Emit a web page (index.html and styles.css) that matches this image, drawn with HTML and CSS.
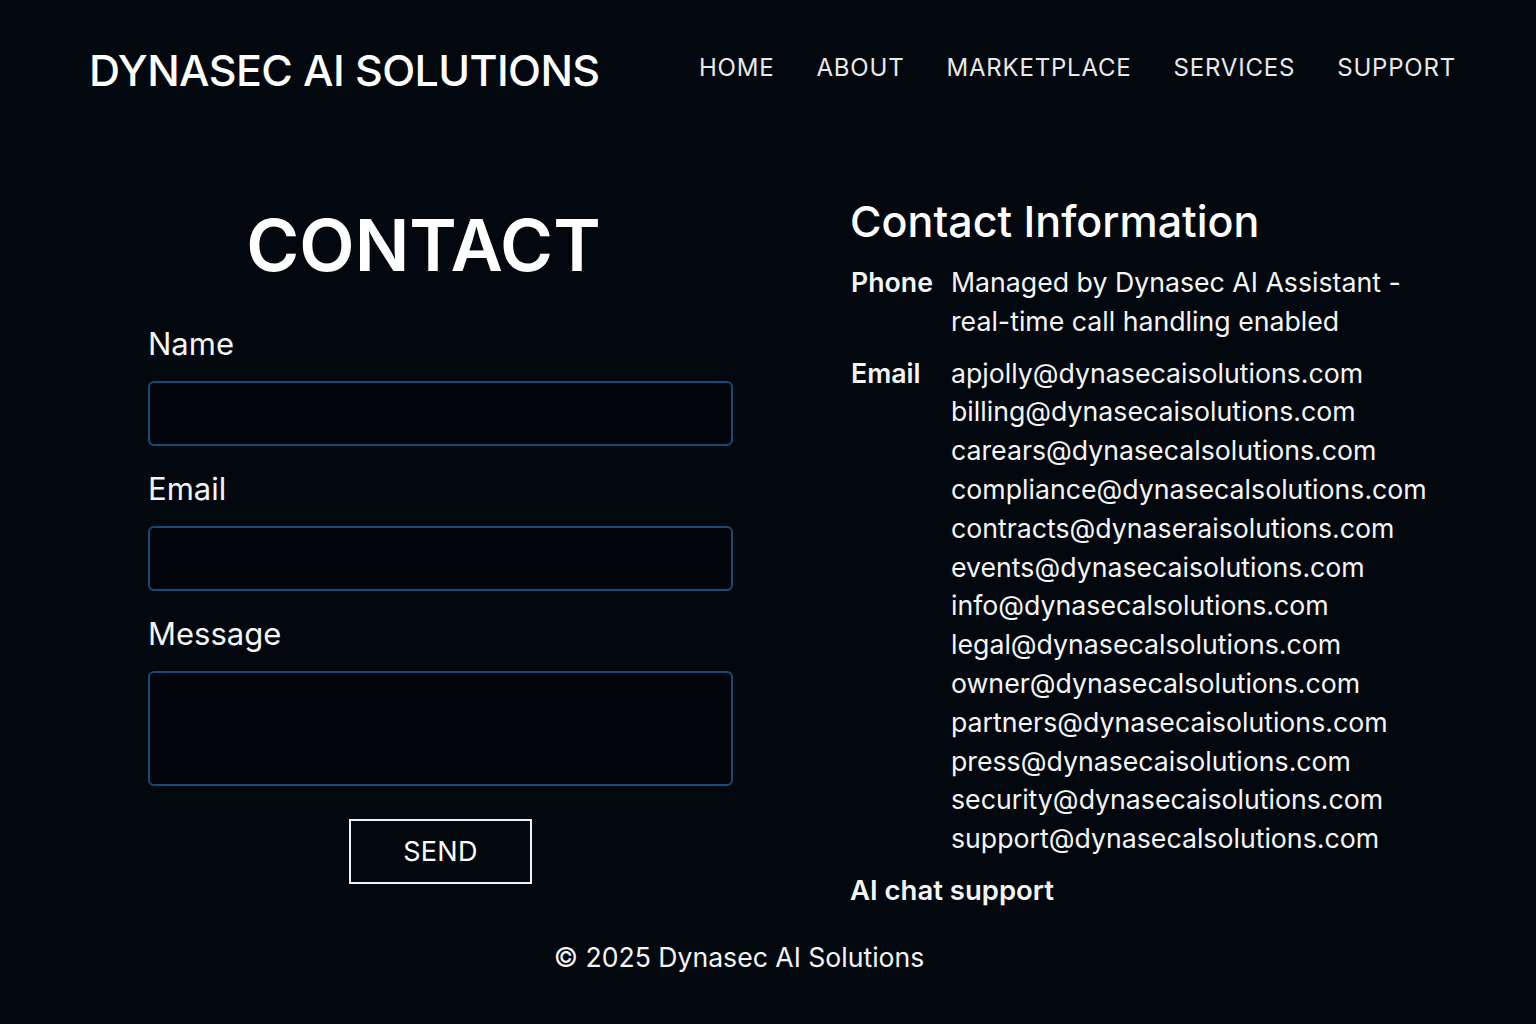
FILE: index.html
```html
<!DOCTYPE html>
<html lang="en">
<head>
<meta charset="utf-8">
<title>Contact - Dynasec AI Solutions</title>
<link rel="stylesheet" href="styles.css">
</head>
<body>
<header class="site-header">
  <div class="logo">DYNASEC AI SOLUTIONS</div>
  <nav class="nav">
    <a href="#">HOME</a>
    <a href="#">ABOUT</a>
    <a href="#">MARKETPLACE</a>
    <a href="#">SERVICES</a>
    <a href="#">SUPPORT</a>
  </nav>
</header>
<main class="main">
  <section class="form-col">
    <h1 class="contact-title">CONTACT</h1>
    <form class="form">
      <label class="label" for="name">Name</label>
      <input class="field" id="name" type="text">
      <label class="label" for="email">Email</label>
      <input class="field" id="email" type="email">
      <label class="label" for="message">Message</label>
      <textarea class="field area" id="message"></textarea>
      <div class="btn-row"><button class="send" type="button">SEND</button></div>
    </form>
  </section>
  <section class="info-col">
    <h2 class="info-title">Contact Information</h2>
    <dl class="info">
      <dt>Phone</dt>
      <dd>Managed by Dynasec AI Assistant -<br>real-time call handling enabled</dd>
      <dt>Email</dt>
      <dd>apjolly@dynasecaisolutions.com<br>billing@dynasecaisolutions.com<br>carears@dynasecalsolutions.com<br>compliance@dynasecalsolutions.com<br>contracts@dynaseraisolutions.com<br>events@dynasecaisolutions.com<br>info@dynasecalsolutions.com<br>legal@dynasecalsolutions.com<br>owner@dynasecalsolutions.com<br>partners@dynasecaisolutions.com<br>press@dynasecaisolutions.com<br>security@dynasecaisolutions.com<br>support@dynasecalsolutions.com</dd>
    </dl>
    <div class="chat">AI chat support</div>
  </section>
</main>
<footer class="footer">© 2025 Dynasec AI Solutions</footer>
</body>
</html>
```
FILE: styles.css
```css
* { box-sizing: border-box; }
html, body { margin: 0; padding: 0; }
body {
  background: #03080f;
  color: #f4f5f6;
  font-family: Inter, "Noto Sans", sans-serif;
  width: 1536px;
  height: 1024px;
  overflow: hidden;
}
.site-header {
  display: flex;
  justify-content: space-between;
  align-items: center;
  height: 135px;
  padding: 0 80px 0 89px;
}
.logo {
  font-size: 43px;
  font-weight: 500;
  letter-spacing: -0.6px;
  color: #ffffff;
  margin-top: 5px;
}
.nav {
  display: flex;
  gap: 42px;
}
.nav a {
  color: #e8e9ea;
  text-decoration: none;
  font-size: 24px;
  letter-spacing: 0.8px;
}
.main {
  display: grid;
  grid-template-columns: 585px 1fr;
  column-gap: 117px;
  padding-left: 148px;
}
.contact-title {
  margin: 70px 0 0;
  padding-right: 34px;
  font-size: 72px;
  line-height: 80px;
  font-weight: 600;
  text-align: center;
  color: #ffffff;
}
.form {
  display: flex;
  flex-direction: column;
  margin-top: 41px;
}
.label {
  font-size: 31px;
  line-height: 36px;
  margin-bottom: 19px;
}
.field {
  display: block;
  width: 585px;
  height: 65px;
  background: #02060c;
  border: 2px solid #174a76;
  border-radius: 6px;
  margin-bottom: 25px;
  color: #fff;
  font: inherit;
  font-size: 24px;
  padding: 0 14px;
}
.area {
  height: 115px;
  resize: none;
  margin-bottom: 33px;
}
.btn-row {
  display: flex;
  justify-content: center;
}
.send {
  width: 183px;
  height: 65px;
  background: transparent;
  border: 2px solid #f2f2f2;
  border-radius: 0;
  color: #ffffff;
  font-family: inherit;
  font-size: 27px;
  letter-spacing: 0.3px;
}
.info-title {
  margin: 61px 0 0;
  font-size: 43px;
  line-height: 50px;
  font-weight: 500;
  color: #ffffff;
}
.info {
  display: grid;
  grid-template-columns: 101px 1fr;
  row-gap: 13px;
  margin: 17px 0 0;
  font-size: 26.7px;
  line-height: 38.8px;
}
.info dt {
  font-weight: 600;
  padding-left: 1px;
}
.info dd {
  margin: 0;
}
.chat {
  margin-top: 13px;
  font-size: 27.5px;
  line-height: 38.8px;
  font-weight: 600;
}
.footer {
  margin-top: 28px;
  text-align: center;
  padding-right: 58px;
  font-size: 26.6px;
  line-height: 38.8px;
}
```
